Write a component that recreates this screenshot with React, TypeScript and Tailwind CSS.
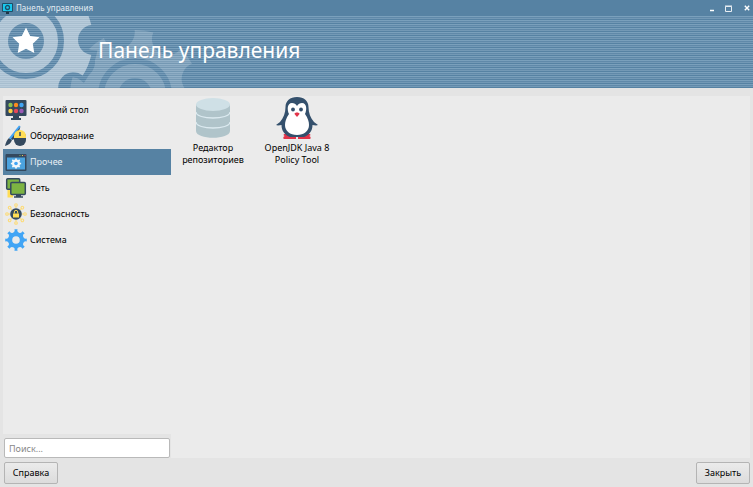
import React from "react";

const polar = (cx: number, cy: number, r: number, a: number) =>
  `${(cx + r * Math.cos(a)).toFixed(1)} ${(cy + r * Math.sin(a)).toFixed(1)}`;

// An eight-toothed wheel: a disc with a round bite between each pair of teeth.
const gearPath = (cx: number, cy: number, r: number, bite: number, turn: number) => {
  const half = 2 * Math.asin(bite / (2 * r));
  let d = "";
  for (let i = 0; i < 8; i++) {
    const a = ((turn + i * 45) * Math.PI) / 180;
    d += `${i === 0 ? "M" : "L"}${polar(cx, cy, r, a - half)}A${bite} ${bite} 0 0 0 ${polar(cx, cy, r, a + half)}`;
    d += `A${r} ${r} 0 0 1 ${polar(cx, cy, r, a + Math.PI / 4 - half)}`;
  }
  return d + "Z";
};

const star = "M26 27.500L30.200 36L39.500 37.300L32.800 43.800L34.300 53L26 48.700L17.700 53L19.200 43.800L12.500 37.300L21.800 36Z";

function BannerArt() {
  const big = gearPath(26, 40, 67, 15, 0);
  const small = gearPath(135, 95, 65, 16, -14.5);
  return (
    <svg className="absolute left-0 top-0" width="240" height="72" viewBox="0 16 240 72" aria-hidden="true">
      <defs>
        <mask id="big">
          <path d={big} fill="#fff" />
          <circle cx="26" cy="41" r="35" fill="none" stroke="#000" strokeWidth="6" />
          <circle cx="26" cy="41" r="18" fill="#000" />
        </mask>
        <mask id="small">
          <path d={small} fill="#fff" />
          <circle cx="135" cy="95" r="34" fill="none" stroke="#000" strokeWidth="6" />
          <circle cx="135" cy="95" r="17" fill="#000" />
          <path d={big} fill="#000" stroke="#000" strokeWidth="10" />
        </mask>
      </defs>
      <rect x="0" y="16" width="240" height="72" fill="#fff" fillOpacity="0.18" mask="url(#small)" />
      <rect x="0" y="16" width="240" height="72" fill="#fff" fillOpacity="0.48" mask="url(#big)" />
      <path d={star} fill="#fff" />
    </svg>
  );
}

const DesktopIcon = () => (
  <svg width="22" height="22" viewBox="0 0 22 22">
    <path d="M8 16h6v3h2v2H6v-2h2z" fill="#32475a" />
    <rect x="0.500" y="1" width="21" height="16" rx="1" fill="#34495e" />
    <circle cx="5.500" cy="6" r="2.200" fill="#8cc152" /><circle cx="11" cy="6" r="2.200" fill="#fb8c1d" /><circle cx="16.500" cy="6" r="2.200" fill="#42a5f5" />
    <circle cx="5.500" cy="12" r="2.200" fill="#f8cf43" /><circle cx="11" cy="12" r="2.200" fill="#e54858" /><circle cx="16.500" cy="12" r="2.200" fill="#9b59b6" />
  </svg>
);

const HardwareIcon = () => (
  <svg width="22" height="22" viewBox="0 0 22 22">
    <path d="M0 21C1 17 2 15 4 13L7 15C6 18 4 20 0 21Z" fill="#34495e" />
    <path d="M4 13L14 0.500L15.500 1.500L7 15Z" fill="#42a5f5" />
    <path d="M6 14L15.500 1.500L13 9L8 15Z" fill="#34495e" />
    <path d="M9 12a6 6 0 0 1 12 0v3a6 6 0 0 1-12 0z" fill="#34495e" />
    <path d="M9 13v-2a6 6 0 0 1 12 0v2z" fill="#ffdd55" />
    <path d="M15 7v4" stroke="#34495e" strokeWidth="1.500" />
  </svg>
);

const OtherIcon = () => (
  <svg width="22" height="22" viewBox="0 0 22 22">
    <rect x="0.500" y="3" width="21" height="17" rx="1" fill="#34495e" />
    <path d="M2 6.500h18v12H2z" fill="#4ba3df" />
    <circle cx="15" cy="4.500" r="0.600" fill="#8cc152" /><circle cx="17.500" cy="4.500" r="0.600" fill="#ffdd55" /><circle cx="20" cy="4.500" r="0.600" fill="#e54858" />
    <path d={gearPath(11, 12.5, 5.2, 1.3, 22.5)} fill="#f2f6f9" />
    <circle cx="11" cy="12.500" r="1.800" fill="#42a5f5" />
  </svg>
);

const NetworkIcon = () => (
  <svg width="22" height="22" viewBox="0 0 22 22">
    <path d="M4 13v6H8" fill="none" stroke="#ffdd55" strokeWidth="3" />
    <rect x="1.700" y="1.700" width="13" height="10.500" rx="1" fill="#7cb342" stroke="#34495e" strokeWidth="1.500" />
    <path d="M11 17h5v3h-5z" fill="#34495e" />
    <rect x="5.800" y="5.500" width="14.500" height="12" rx="1" fill="#7cb342" stroke="#34495e" strokeWidth="1.500" />
    <path d="M9 20h9" stroke="#34495e" strokeWidth="1.500" />
  </svg>
);

const SecurityIcon = () => (
  <svg width="22" height="22" viewBox="0 0 22 22">
    <g fill="none" stroke="#fddb74" strokeWidth="1.100">
      {[0, 45, 90, 135, 180, 225, 270, 315].map((a) => (
        <g key={a} transform={`rotate(${a} 11 11)`}><path d="M11 5V3.500" /><circle cx="11" cy="2" r="1.300" /></g>
      ))}
    </g>
    <circle cx="11" cy="11" r="5.800" fill="#34495e" />
    <path d="M8 10.500h6v4H8z" fill="#ffdd55" />
    <path d="M9.300 10.500V9a1.700 1.700 0 0 1 3.400 0v1.500" fill="none" stroke="#ffdd55" />
  </svg>
);

const SystemIcon = () => (
  <svg width="22" height="22" viewBox="0 0 22 22">
    <path d={gearPath(11, 11, 10.8, 2.6, 22.5)} fill="#42a5f5" />
    <circle cx="11" cy="11" r="3.800" fill="#ebebeb" />
  </svg>
);

const DatabaseIcon = () => (
  <svg width="34" height="40" viewBox="0 0 34 40">
    <path d="M0 6v27c0 9 34 9 34 0V6z" fill="#b0c4ca" />
    <ellipse cx="17" cy="6.500" rx="17" ry="6.500" fill="#cfe0e6" />
    <path d="M0 14c0 8 34 8 34 0M0 24c0 8 34 8 34 0" fill="none" stroke="#dceaf0" strokeWidth="1.300" />
  </svg>
);

const PenguinIcon = () => (
  <svg width="42" height="42" viewBox="0 0 42 42">
    <path d="M8 37h26c1 1 0 2-1 2 2 0 2 3 1 3H22v-2h-2v2H8c-1 0-1-3 1-3-1 0-2-1-1-2z" fill="#e2344a" />
    <path d="M9.500 10C9.500 4 14 0 21 0s11.500 4 11.500 10c0 6 2 11 5.500 15l4 3c-2 1-4 0-5.500 0 0 6-3.500 10-8.500 12h-14C9 38 5.500 34 5.500 28c-1.500 0-3.500 1-5.500 0l4-3c3.500-4 5.500-9 5.500-15z" fill="#34506c" />
    <path d="M21 9c1-2 3-3 5-3 5 0 5 7 3 11 3 4 4 8 4 11 0 6-5 10-12 10S9 34 9 28c0-3 1-7 4-11-2-4-2-11 3-11 2 0 4 1 5 3z" fill="#fff" />
    <circle cx="17" cy="12.500" r="1.900" fill="#34506c" /><circle cx="25" cy="12.500" r="1.900" fill="#34506c" />
    <path d="M21 20l-2.500-3c0-2 5-2 5 0z" fill="#e2344a" />
  </svg>
);

const AppIcon = () => (
  <svg width="11" height="11" viewBox="0 0 11 11">
    <path d="M4 8h3v3H4z" fill="#1d3546" /><rect width="11" height="9" rx="1" fill="#1d4f68" />
    <path d="M1 1h9v7H1z" fill="#19c8ee" /><circle cx="5.500" cy="4.500" r="2" fill="none" stroke="#1d4f68" strokeWidth="1.300" />
  </svg>
);

const categories = [
  { name: "Рабочий стол", Icon: DesktopIcon },
  { name: "Оборудование", Icon: HardwareIcon },
  { name: "Прочее", Icon: OtherIcon, active: true },
  { name: "Сеть", Icon: NetworkIcon },
  { name: "Безопасность", Icon: SecurityIcon },
  { name: "Система", Icon: SystemIcon },
];

const push = "h-[22px] w-[54px] cursor-default rounded-[2px] border border-[#b4b4b4] bg-linear-to-b from-[#ebebeb] to-[#dcdcdc] text-black";

export default function App() {
  return (
    <div className="flex min-h-screen flex-col bg-[#e4e4e4] font-['Noto_Sans',sans-serif] text-[9px] text-black">
      <header className="bg-[#5682a3] text-white">
        <div className="flex h-4 items-center px-0.5">
          <AppIcon />
          <span className="ml-[3px] flex-1 text-[8px] leading-4 text-[#e4edf3]">Панель управления</span>
          <div className="flex items-center gap-2">
            <button aria-label="Свернуть" className="flex h-3 w-2 items-center justify-center"><svg width="6" height="8"><path d="M1 6.500h4" stroke="#fff" strokeWidth="1.500" /></svg></button>
            <button aria-label="Развернуть" className="flex h-3 w-2 items-center justify-center"><svg width="7" height="7"><path d="M.5 1.500h6v5h-6zM0 1h7" fill="none" stroke="#e8eef3" /></svg></button>
            <button aria-label="Закрыть окно" className="ml-[3px] flex h-3 w-2 items-center justify-center"><svg width="6" height="6"><path d="M.8.8l4.400 4.400M5.200.8L.8 5.200" stroke="#fff" strokeWidth="1.400" /></svg></button>
          </div>
        </div>
        <div className="relative flex h-[72px] items-center bg-[repeating-linear-gradient(to_bottom,#7aa0bc_0_1px,#6089a9_1px_2px,#7399b6_2px_3px,#5682a3_3px_4px)] pl-[98px]">
          <BannerArt />
          <h1 className="relative pb-1 text-[21px] leading-8">Панель управления</h1>
        </div>
      </header>
      <main className="flex flex-1 flex-col px-[3px] pb-[3px] pt-2">
        <div className="flex flex-1">
          <aside className="flex w-[168px] shrink-0 flex-col">
            <nav className="flex-1 bg-[#ebebeb] pt-px">
              {categories.map(({ name, Icon, active }) => (
                <button key={name} className={`flex h-[26px] w-full cursor-default items-center gap-[3px] pl-0.5 text-left ${active ? "bg-[#5682a3] text-[#e9eff4]" : ""}`}>
                  <Icon />
                  <span>{name}</span>
                </button>
              ))}
            </nav>
            <div className="flex px-px pt-1">
              <input type="text" aria-label="Поиск" placeholder="Поиск..." className="h-5 w-full rounded-[2px] border border-[#b9b9b9] bg-white px-1 outline-none placeholder:text-[#888]" />
            </div>
          </aside>
          <section className="flex flex-1 items-start bg-[#ebebeb] text-center leading-3">
            <button className="flex w-[84px] flex-col items-center">
              <span className="flex h-11 items-center"><DatabaseIcon /></span>
              <span className="mt-0.5">Редактор<br />репозиториев</span>
            </button>
            <button className="flex w-[84px] flex-col items-center">
              <span className="flex h-11 items-center"><PenguinIcon /></span>
              <span className="mt-0.5">OpenJDK Java 8<br />Policy Tool</span>
            </button>
          </section>
        </div>
        <footer className="mt-1 flex justify-between pl-px">
          <button className={push}>Справка</button>
          <button className={push}>Закрыть</button>
        </footer>
      </main>
    </div>
  );
}
